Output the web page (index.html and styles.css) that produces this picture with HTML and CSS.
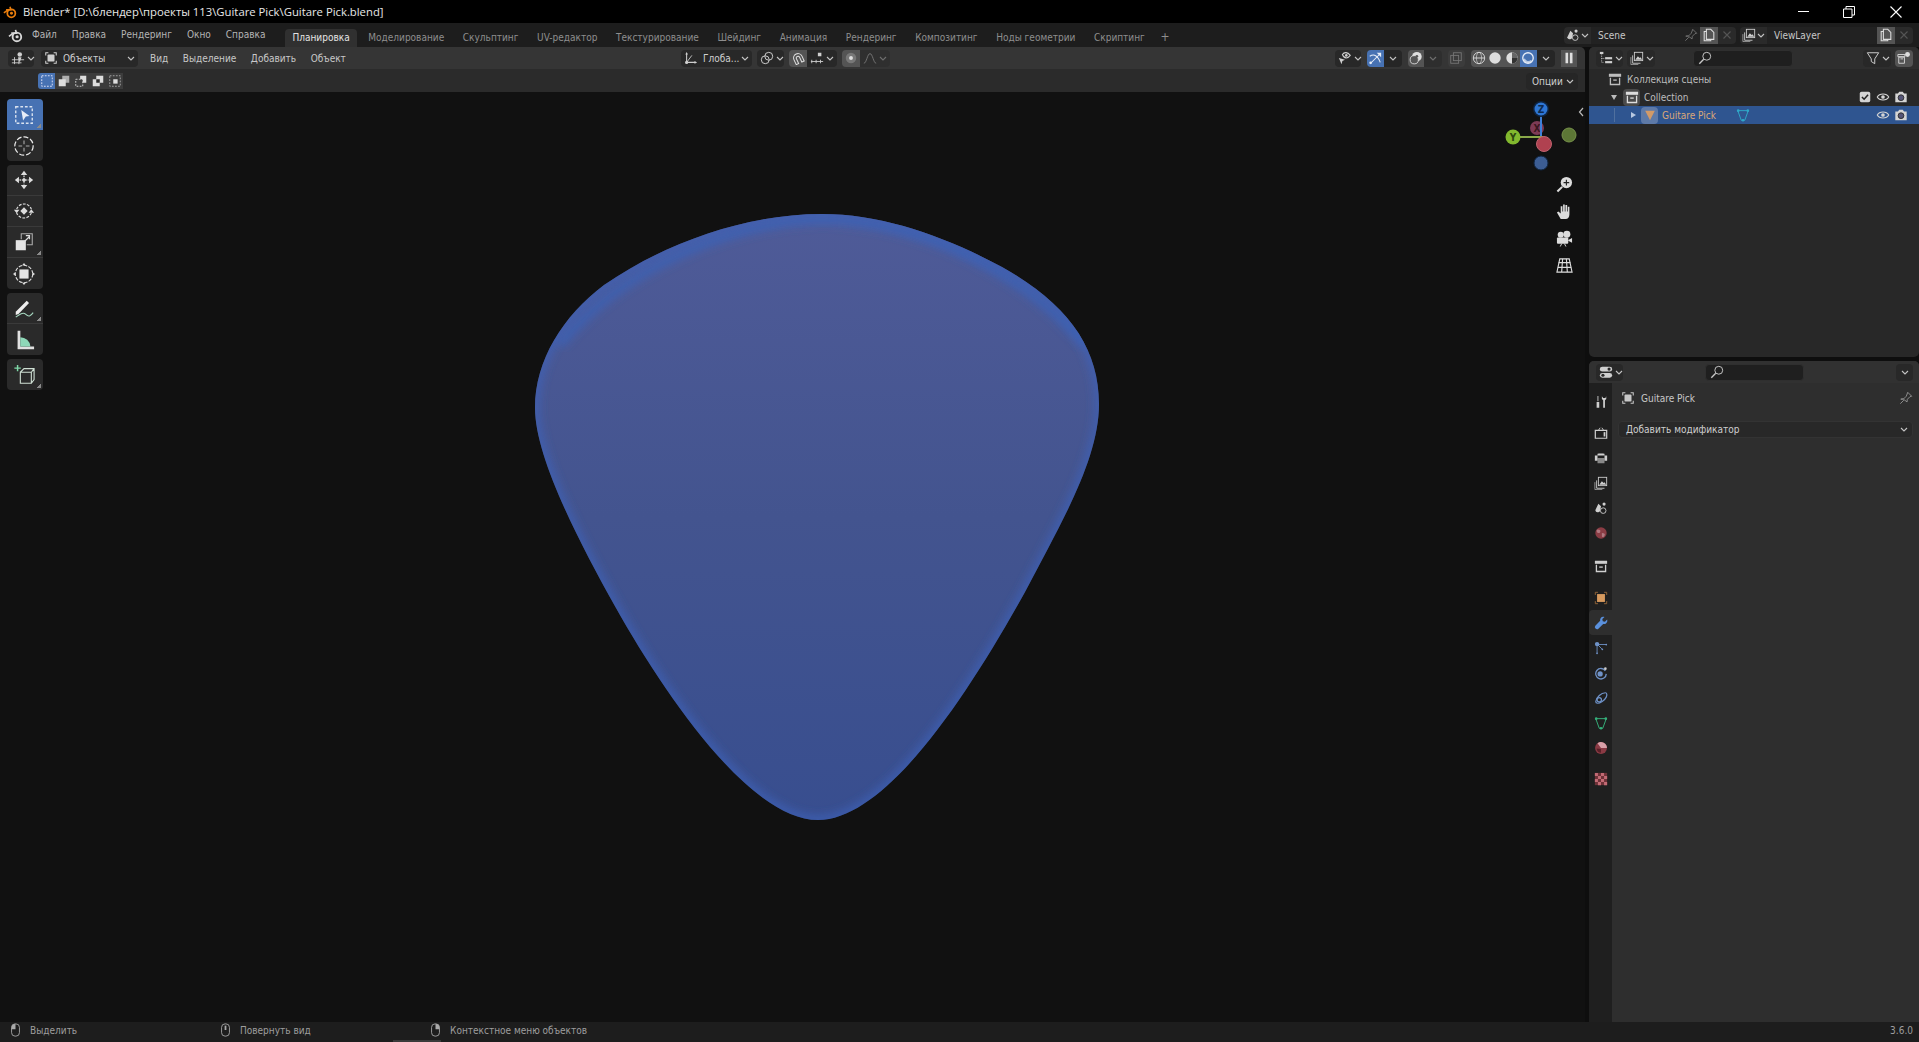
FILE: index.html
```html
<!DOCTYPE html>
<html lang="ru">
  <head>
    <meta charset="UTF-8" />
    <title>Blender</title>
    <link rel="stylesheet" href="styles.css">
  </head>
  <body>
    <!-- icons -->
    <svg class="sprite" width="0" height="0">
      <symbol id="chev" viewBox="0 0 8 5"><path d="M1 1l3 3 3-3" fill="none" stroke="currentColor" stroke-width="1.100"/></symbol>
      <symbol id="blender" viewBox="0 0 16 16"><circle cx="9.500" cy="9.500" r="4.600" fill="none" stroke="currentColor" stroke-width="2"/><circle cx="9.700" cy="9.300" r="1.700" fill="currentColor"/><path d="M1 9l5.500-4M3.500 5.500H9L8 2" fill="none" stroke="currentColor" stroke-width="1.800"/></symbol>
      <symbol id="view3d" viewBox="0 0 16 16"><path d="M1 10h14M1 13.500h11M4 7v8M9 8v7" stroke="currentColor" fill="none"/><circle cx="10" cy="4" r="2.600" fill="currentColor"/><path d="M8 7l2 6 2-6z" fill="currentColor"/></symbol>
      <symbol id="objmode" viewBox="0 0 16 16"><path d="M2 5V2h3M11 2h3v3M14 11v3h-3M5 14H2v-3" fill="none" stroke="currentColor" stroke-width="1.200"/><rect x="4" y="4" width="8" height="8" rx="1" fill="currentColor"/></symbol>
      <symbol id="sel1" viewBox="0 0 16 16"><rect x="2" y="2" width="12" height="12" fill="none" stroke="currentColor" stroke-dasharray="2 1.500"/></symbol>
      <symbol id="sel2" viewBox="0 0 16 16"><rect x="6" y="2" width="8" height="8" fill="currentColor" opacity=".7"/><rect x="2" y="6" width="8" height="8" fill="currentColor"/></symbol>
      <symbol id="sel3" viewBox="0 0 16 16"><rect x="2" y="6" width="8" height="8" fill="none" stroke="currentColor" stroke-dasharray="2 1.500"/><path d="M7 2h7v8h-4V6H7z" fill="currentColor"/></symbol>
      <symbol id="sel4" viewBox="0 0 16 16"><path d="M6 2h8v8h-4V6H6zM2 6h8v8H2zM6 10h0" fill="currentColor"/><rect x="6" y="6" width="4" height="4" fill="#2b2b2b"/></symbol>
      <symbol id="sel5" viewBox="0 0 16 16"><rect x="2" y="2" width="12" height="12" fill="none" stroke="currentColor" stroke-dasharray="2 1.500" opacity=".7"/><rect x="6" y="6" width="5" height="5" fill="currentColor"/></symbol>
      <symbol id="orient" viewBox="0 0 16 16"><path d="M3 3v10h10" fill="none" stroke="currentColor" stroke-width="1.200"/><path d="M3 13L9 5" stroke="currentColor" fill="none"/><circle cx="3" cy="13" r="1.800" fill="currentColor"/><path d="M1.500 4L3 1l1.500 3zM12 11.500l3 1.500-3 1.500z" fill="currentColor"/></symbol>
      <symbol id="pivot" viewBox="0 0 16 16"><circle cx="6" cy="10" r="4.500" fill="none" stroke="currentColor" stroke-width="1.100"/><circle cx="10" cy="6" r="4.500" fill="none" stroke="currentColor" stroke-width="1.100"/></symbol>
      <symbol id="snap" viewBox="0 0 16 16"><g transform="rotate(-25 8 8)"><path d="M3 14V8a5 5 0 0 1 10 0v6h-3V8a2 2 0 0 0-4 0v6z" fill="none" stroke="currentColor" stroke-width="1.200"/></g></symbol>
      <symbol id="snapinc" viewBox="0 0 16 16"><path d="M1 12h14M2 10v4M7 10v4M12 10v4" stroke="currentColor" fill="none"/><rect x="9" y="2" width="4" height="4" fill="currentColor"/></symbol>
      <symbol id="prop" viewBox="0 0 16 16"><circle cx="8" cy="8" r="6" fill="currentColor" opacity=".25"/><circle cx="8" cy="8" r="2.200" fill="currentColor"/></symbol>
      <symbol id="falloff" viewBox="0 0 16 16"><path d="M1 14c3 0 4-11 7-11s4 11 7 11" fill="none" stroke="currentColor" stroke-width="1.100"/></symbol>
      <symbol id="eyeview" viewBox="0 0 16 16"><path d="M5 4c2-3 6-3 9 1-3 4-7 4-9-1z" fill="none" stroke="currentColor" stroke-width="1.200"/><circle cx="9.500" cy="5" r="1.500" fill="currentColor"/><path d="M1 8l7 2-3 1.500L4 15z" fill="currentColor"/></symbol>
      <symbol id="gizmo" viewBox="0 0 16 16"><path d="M3 14L13 4" stroke="currentColor" stroke-width="1.200"/><path d="M2 6c5-3 9-1 12 7" fill="none" stroke="currentColor" stroke-width="1.200"/><path d="M10 2h5v5z" fill="currentColor"/><circle cx="3" cy="13.500" r="1.500" fill="currentColor"/></symbol>
      <symbol id="overlay" viewBox="0 0 16 16"><circle cx="9" cy="6.500" r="5.500" fill="currentColor"/><circle cx="6" cy="10" r="4.700" fill="#555" stroke="currentColor"/><circle cx="9" cy="6" r="1.500" fill="#555"/></symbol>
      <symbol id="xray" viewBox="0 0 16 16"><rect x="5" y="2" width="9" height="9" fill="none" stroke="currentColor"/><rect x="2" y="5" width="9" height="9" fill="none" stroke="currentColor"/></symbol>
      <symbol id="wire" viewBox="0 0 16 16"><circle cx="8" cy="8" r="6.500" fill="none" stroke="currentColor"/><ellipse cx="8" cy="8" rx="3" ry="6.500" fill="none" stroke="currentColor" stroke-width=".7"/><path d="M1.500 8h13" stroke="currentColor"/></symbol>
      <symbol id="solid" viewBox="0 0 16 16"><circle cx="8" cy="8" r="6.500" fill="currentColor"/></symbol>
      <symbol id="matprev" viewBox="0 0 16 16"><circle cx="8" cy="8" r="6.500" fill="currentColor"/><path d="M8 8h6.500A6.500 6.500 0 0 1 8 14.500z" fill="#333"/><path d="M8 1.500A6.500 6.500 0 0 1 14.500 8H8z" fill="#666"/></symbol>
      <symbol id="render" viewBox="0 0 16 16"><circle cx="8" cy="8" r="6" fill="none" stroke="currentColor" stroke-width="1.500"/><path d="M3.500 9A5 5 0 0 0 12 11" fill="none" stroke="currentColor" stroke-width="2.200" opacity=".7"/></symbol>
      <symbol id="pause" viewBox="0 0 16 16"><rect x="4" y="2" width="3" height="12" fill="currentColor"/><rect x="9" y="2" width="3" height="12" fill="currentColor"/></symbol>
      <symbol id="scene" viewBox="0 0 16 16"><path d="M5 3L1.500 10.500a3 3 0 0 0 5.500 1L8 6z" fill="currentColor"/><circle cx="10.500" cy="11" r="3.200" fill="none" stroke="currentColor"/><circle cx="11.500" cy="3.500" r="1.800" fill="currentColor"/></symbol>
      <symbol id="layer" viewBox="0 0 16 16"><path d="M3 5v9h9" fill="none" stroke="currentColor"/><path d="M1 7v8.500h8.500" fill="none" stroke="currentColor" opacity=".7"/><rect x="5" y="1.500" width="9.500" height="9.500" fill="none" stroke="currentColor"/><path d="M6 10l3-4 2 2 1-1 2 3z" fill="currentColor"/></symbol>
      <symbol id="pin" viewBox="0 0 16 16"><path d="M10 1.500l4.500 4.500-2 .5-3 3-.3 3L5 9.300l-3 0 3.300-.3 3-3z" fill="none" stroke="currentColor"/><path d="M5.500 10.500L1.500 14.500" stroke="currentColor"/></symbol>
      <symbol id="copy" viewBox="0 0 16 16"><path d="M5 1.500h5l3.500 3.500v8H5z" fill="none" stroke="currentColor" stroke-width="1.200"/><path d="M5 4H2.500v10.500H10V13" fill="none" stroke="currentColor" stroke-width="1.200"/></symbol>
      <symbol id="close" viewBox="0 0 16 16"><path d="M4 4l8 8M12 4l-8 8" stroke="currentColor" stroke-width="1.300"/></symbol>
      <symbol id="outliner" viewBox="0 0 16 16"><rect x="1" y="1" width="4" height="2.500" fill="currentColor"/><path d="M3 4v9h3M3 8.500h3" fill="none" stroke="currentColor" stroke-dasharray="1 1"/><rect x="7" y="7" width="8" height="2.500" fill="currentColor"/><rect x="7" y="11.500" width="8" height="2.500" fill="currentColor"/></symbol>
      <symbol id="propsed" viewBox="0 0 16 16"><rect x="1" y="2" width="14" height="5.500" rx="2.700" fill="currentColor"/><circle cx="11.500" cy="4.700" r="1.800" fill="#282828"/><rect x="1" y="9" width="14" height="5.500" rx="2.700" fill="currentColor"/><circle cx="4.500" cy="11.700" r="1.800" fill="#282828"/></symbol>
      <symbol id="search" viewBox="0 0 16 16"><circle cx="10" cy="6" r="4.500" fill="none" stroke="currentColor" stroke-width="1.100"/><path d="M6.500 9.500L1.500 14.500" stroke="currentColor" stroke-width="1.600"/></symbol>
      <symbol id="filter" viewBox="0 0 16 16"><path d="M1.500 2h13L10 9v5.500L6 12V9z" fill="none" stroke="currentColor" stroke-width="1.100"/></symbol>
      <symbol id="newcoll" viewBox="0 0 16 16"><path d="M1 4h8v2.500H1zM2 7h6.500v7H2z" fill="none" stroke="currentColor"/><path d="M4 9h3" stroke="currentColor"/><circle cx="12" cy="4" r="2.800" fill="currentColor"/></symbol>
      <symbol id="coll" viewBox="0 0 16 16"><path d="M1 2h14v3.500H1z" fill="currentColor"/><path d="M2 6.500V15h12V6.500h-1.500v7H3.500v-7z" fill="currentColor"/><path d="M6 8.500h4v1.500H6z" fill="currentColor"/></symbol>
      <symbol id="eye" viewBox="0 0 16 16"><path d="M1.500 8C4 3.500 12 3.500 14.500 8 12 12.500 4 12.500 1.500 8z" fill="none" stroke="currentColor" stroke-width="1.300"/><circle cx="8" cy="8" r="2.100" fill="currentColor"/></symbol>
      <symbol id="cam" viewBox="0 0 16 16"><path d="M1.500 4h3l1.500-2h4l1.500 2h3v10h-13z" fill="currentColor"/><circle cx="8" cy="8.800" r="3.300" fill="#557" stroke="#2a2a2a"/></symbol>
      <symbol id="check" viewBox="0 0 16 16"><rect x="2" y="2" width="12" height="12" rx="2" fill="currentColor"/><path d="M4.500 8l2.500 2.500 4.500-5" fill="none" stroke="#222" stroke-width="1.800"/></symbol>
      <symbol id="meshdata" viewBox="0 0 16 16"><path d="M2 3h12l-4 11H6z" fill="none" stroke="currentColor" stroke-width="1.100"/><circle cx="2.500" cy="3" r="1.500" fill="currentColor"/><circle cx="13.500" cy="3" r="1.500" fill="currentColor"/><circle cx="8" cy="14" r="1.500" fill="currentColor"/></symbol>
      <symbol id="meshobj" viewBox="0 0 16 16"><path d="M2.500 3h11L8 14z" fill="currentColor"/></symbol>
      <symbol id="tool" viewBox="0 0 16 16"><path d="M3 8h3v6.500H3zM4 1h1v6H4z" fill="currentColor"/><path d="M9 1.500v3l1.500 1.500V14.500h2V6L14 4.500v-3l-1 2h-2.500z" fill="currentColor"/></symbol>
      <symbol id="rtab" viewBox="0 0 16 16"><path d="M1.500 5h13v9h-13z" fill="none" stroke="currentColor" stroke-width="1.400"/><path d="M5 5L7 2M11 5L9 2" stroke="currentColor"/><rect x="11" y="7" width="2" height="5" fill="currentColor"/></symbol>
      <symbol id="otab" viewBox="0 0 16 16"><path d="M1 5h14v6h-3V3H4v8H1z" fill="currentColor"/><rect x="4" y="8" width="8" height="6" fill="currentColor" opacity=".6"/><rect x="5" y="3" width="6" height="1" fill="currentColor"/></symbol>
      <symbol id="world" viewBox="0 0 16 16"><circle cx="8" cy="8" r="6.500" fill="#8a3c44"/><path d="M4 4c3 0 4 1 3 3S3 8 3 5zM9 8c3 0 4 1 3 3s-2 2-3 1z" fill="#c8a0a8" opacity=".6"/></symbol>
      <symbol id="objtab" viewBox="0 0 16 16"><path d="M1.500 4.500v-3h3M11.500 1.500h3v3M14.500 11.500v3h-3M4.500 14.500h-3v-3" fill="none" stroke="#9a6a3a"/><rect x="3.500" y="3.500" width="9" height="9" fill="#d79a5e"/></symbol>
      <symbol id="wrench" viewBox="0 0 16 16"><path d="M15 4l-2.500 2.500-2.500-.5-.5-2.500L12 1c-3-1-5.500 1-5 4.500L1.500 11a2.500 2.500 0 0 0 3.500 3.500L10.500 9c3 1 5.500-2 4.500-5z" fill="currentColor"/></symbol>
      <symbol id="particles" viewBox="0 0 16 16"><circle cx="3.500" cy="3.500" r="2.500" fill="currentColor"/><path d="M4 4h10M4 4l5 5M3.500 4v10" stroke="currentColor" fill="none"/><circle cx="14" cy="4" r="1" fill="currentColor"/><circle cx="9.500" cy="9.500" r="1" fill="currentColor"/><circle cx="3.500" cy="14" r="1" fill="currentColor"/></symbol>
      <symbol id="physics" viewBox="0 0 16 16"><path d="M13 5.500A6 6 0 1 0 14 9" fill="none" stroke="currentColor" stroke-width="1.500"/><circle cx="7" cy="9" r="3" fill="currentColor"/><circle cx="13" cy="3" r="1.500" fill="#ccc"/></symbol>
      <symbol id="constr" viewBox="0 0 16 16"><path d="M2 12C3 7 8 2 13 2c2 0 2 3 1 5-2 4-7 7-10 7-1 0-2-1-2-2z" fill="none" stroke="currentColor" stroke-width="1.400"/><circle cx="6" cy="10" r="2.500" fill="none" stroke="currentColor" stroke-width="1.400"/></symbol>
      <symbol id="material" viewBox="0 0 16 16"><circle cx="8" cy="8" r="6.800" fill="#8a3a44"/><path d="M8 8h6.800A6.800 6.800 0 0 0 4 2.500z" fill="#d8a0a8"/><path d="M3 8.500a5 5 0 0 0 5 5V9z" fill="#5a2028"/></symbol>
      <symbol id="checker" viewBox="0 0 16 16"><path d="M1 1h14v14H1z" fill="#6e3238"/><path d="M1 1h3.500v3.500H1zM8 1h3.500v3.500H8zM4.500 4.500H8V8H4.500zM11.500 4.500H15V8h-3.500zM1 8h3.500v3.500H1zM8 8h3.500v3.500H8zM4.500 11.500H8V15H4.500zM11.500 11.500H15V15h-3.500z" fill="#c26a74"/></symbol>
      <symbol id="mouse" viewBox="0 0 12 16"><rect x="1.500" y="1" width="9" height="14" rx="4" fill="none" stroke="currentColor"/><path d="M6 1H5.500A4 4 0 0 0 1.500 5v2H6z" fill="currentColor"/></symbol>
      <symbol id="mousemid" viewBox="0 0 12 16"><rect x="1.500" y="1" width="9" height="14" rx="4" fill="none" stroke="currentColor"/><rect x="5" y="3" width="2" height="5" fill="currentColor"/></symbol>
      <symbol id="mouser" viewBox="0 0 12 16"><rect x="1.500" y="1" width="9" height="14" rx="4" fill="none" stroke="currentColor"/><path d="M6 1h.5a4 4 0 0 1 4 4v2H6z" fill="currentColor"/></symbol>
      <symbol id="zoomnav" viewBox="0 0 18 18"><circle cx="11" cy="7" r="6" fill="currentColor"/><path d="M8 7h6M11 4v6" stroke="#222" stroke-width="1.200"/><path d="M6.500 11.500L1.500 16.500" stroke="currentColor" stroke-width="2.200"/></symbol>
      <symbol id="hand" viewBox="0 0 18 18"><path d="M5 17L1 10l1.500-1L5 11V3.500h1.800V9h.7V1.500h1.800V9h.7V2h1.800v7h.7V4h1.700v8c0 3-1.500 5-4 5z" fill="currentColor"/></symbol>
      <symbol id="camnav" viewBox="0 0 18 18"><circle cx="5" cy="5" r="3.200" fill="currentColor"/><circle cx="11.500" cy="4.500" r="3.700" fill="currentColor"/><rect x="1" y="8" width="12" height="6.500" rx="1" fill="currentColor"/><path d="M13 10.500l4-2v5l-4-2z" fill="currentColor"/><path d="M6 14.500l-1.500 3M9 14.500l1.500 3" stroke="currentColor"/></symbol>
      <symbol id="gridnav" viewBox="0 0 18 18"><path d="M4 2h10l3 14H1z" fill="none" stroke="currentColor" stroke-width="1.200"/><path d="M2.800 6h12.400M2 11h14M7 2L6 16M11 2l1 14" stroke="currentColor" stroke-width="1.200"/></symbol>
      <symbol id="t-select" viewBox="0 0 24 24"><rect x="3" y="3" width="18" height="18" fill="none" stroke="#fff" stroke-width="1.500" stroke-dasharray="3 2" opacity=".8"/><path d="M9 6.500l9 6.500-4 .5L11 18z" fill="#e8eef8"/></symbol>
      <symbol id="t-cursor" viewBox="0 0 24 24"><circle cx="12" cy="12" r="10" fill="none" stroke="#eee" stroke-width="1.300" stroke-dasharray="5.500 2.200"/><path d="M12 6v4M12 14v4M6 12h4M14 12h4" stroke="#aaa" stroke-width="1.200"/></symbol>
      <symbol id="t-move" viewBox="0 0 24 24"><path d="M12 2l3.500 4.500h-7zM12 22l-3.500-4.500h7zM2 12l4.500-3.500v7zM22 12l-4.500 3.500v-7z" fill="#ddd"/><path d="M12 7v10M7 12h10" stroke="#ccc" stroke-width="1.500" stroke-dasharray="2 1"/><circle cx="12" cy="12" r="1.800" fill="#ddd"/></symbol>
      <symbol id="t-rotate" viewBox="0 0 24 24"><path d="M4 10A8.500 8.500 0 0 1 20 10M20 14A8.500 8.500 0 0 1 4 14" fill="none" stroke="#ddd" stroke-width="1.300" stroke-dasharray="3 1.500"/><path d="M1 10.500h6l-3 4zM17 14h6l-3-4z" fill="#ddd"/><path d="M12 8l4 4-4 4-4-4z" fill="#ddd"/></symbol>
      <symbol id="t-scale" viewBox="0 0 24 24"><path d="M9 9V3h12v12h-6" fill="none" stroke="#aaa" stroke-width="1.200"/><rect x="3" y="10" width="11" height="11" fill="#e4e4e4"/><path d="M12 12l6-6M14 5h4v4" fill="none" stroke="#ddd" stroke-width="1.300"/></symbol>
      <symbol id="t-trans" viewBox="0 0 24 24"><circle cx="12" cy="12" r="9.500" fill="none" stroke="#ddd" stroke-width="1.200" stroke-dasharray="4 1.500"/><rect x="7" y="7" width="10" height="10" fill="#e4e4e4"/><path d="M12 0l2 2.500h-4zM12 24l-2-2.500h4zM0 12l2.500-2v4zM24 12l-2.500 2v-4z" fill="#ddd"/></symbol>
      <symbol id="t-annot" viewBox="0 0 24 24"><path d="M3 16L15 4l2.500 2.500L6 18.500l-3 1z" fill="#eee"/><path d="M3 22c4-3 8-6 11-3s5 2 8-2" fill="none" stroke="#a6d8c0" stroke-width="1.200"/></symbol>
      <symbol id="t-measure" viewBox="0 0 24 24"><path d="M5 2h3v17h15v3H5z" fill="#e0e0e0"/><path d="M8 9a11 11 0 0 1 11 10H8z" fill="#8ed8b8"/></symbol>
      <symbol id="t-add" viewBox="0 0 24 24"><path d="M8 9h12v12H8zM8 9l4-4h11v12l-3 4M20 9l3-4" fill="none" stroke="#cfe0d4" stroke-width="1.200"/><path d="M5 1v7M1.500 4.500h7" stroke="#7fd8a8" stroke-width="1.600"/></symbol>
    </svg>

    <div class="titlebar">
      <svg class="title-logo"><use href="#blender"/></svg>
      <span class="title-text">Blender* [D:\блендер\проекты 113\Guitare Pick\Guitare Pick.blend]</span>
      <div class="win-btns">
        <span class="win-min"></span>
        <svg class="win-max" viewBox="0 0 12 12"><path d="M3 3V.5h8.500V9H9M.5 3h8.500v8.500H.5z" fill="none" stroke="#fff"/></svg>
        <svg class="win-close" viewBox="0 0 12 12"><path d="M.5.500l11 11M11.500.500l-11 11" stroke="#fff" stroke-width="1.100"/></svg>
      </div>
    </div>

    <div class="topbar">
      <svg class="top-logo"><use href="#blender"/></svg>
      <ul class="menu">
        <li>Файл</li>
        <li>Правка</li>
        <li>Рендеринг</li>
        <li>Окно</li>
        <li>Справка</li>
      </ul>
      <ul class="tabs">
        <li class="active">Планировка</li>
        <li>Моделирование</li>
        <li>Скульптинг</li>
        <li>UV-редактор</li>
        <li>Текстурирование</li>
        <li>Шейдинг</li>
        <li>Анимация</li>
        <li>Рендеринг</li>
        <li>Композитинг</li>
        <li>Ноды геометрии</li>
        <li>Скриптинг</li>
        <li class="tab-add">+</li>
      </ul>
      <div class="scene-group">
        <div class="picker"><svg class="ic"><use href="#scene"/></svg><svg class="chev"><use href="#chev"/></svg></div>
        <div class="name-field scene-name">Scene<svg class="ic pin-ic"><use href="#pin"/></svg></div>
        <div class="sq-btn grey"><svg class="ic"><use href="#copy"/></svg></div>
        <div class="sq-btn dim"><svg class="ic"><use href="#close"/></svg></div>
      </div>
      <div class="scene-group layer-group">
        <div class="picker"><svg class="ic"><use href="#layer"/></svg><svg class="chev"><use href="#chev"/></svg></div>
        <div class="name-field layer-name">ViewLayer</div>
        <div class="sq-btn grey"><svg class="ic"><use href="#copy"/></svg></div>
        <div class="sq-btn dim"><svg class="ic"><use href="#close"/></svg></div>
      </div>
    </div>

    <div class="workspace">
      <!-- 3d view -->
      <div class="view-area">
        <div class="view-header">
          <div class="hdr-left">
            <div class="dd editor-dd"><svg class="ic"><use href="#view3d"/></svg><svg class="chev"><use href="#chev"/></svg></div>
            <div class="dd mode-dd"><svg class="ic"><use href="#objmode"/></svg><span>Объекты</span><svg class="chev"><use href="#chev"/></svg></div>
            <ul class="view-menu">
              <li>Вид</li>
              <li>Выделение</li>
              <li>Добавить</li>
              <li>Объект</li>
            </ul>
          </div>
          <div class="hdr-center">
            <div class="dd orient-dd"><svg class="ic"><use href="#orient"/></svg><span>Глоба...</span><svg class="chev"><use href="#chev"/></svg></div>
            <div class="dd pivot-dd"><svg class="ic"><use href="#pivot"/></svg><svg class="chev"><use href="#chev"/></svg></div>
            <div class="joined snap-dd">
              <div class="sq-btn grey"><svg class="ic"><use href="#snap"/></svg></div>
              <div class="dd"><svg class="ic"><use href="#snapinc"/></svg><svg class="chev"><use href="#chev"/></svg></div>
            </div>
            <div class="joined prop-dd">
              <div class="sq-btn grey"><svg class="ic"><use href="#prop"/></svg></div>
              <div class="dd faded"><svg class="ic"><use href="#falloff"/></svg><svg class="chev"><use href="#chev"/></svg></div>
            </div>
          </div>
          <div class="hdr-right">
            <div class="dd eye-dd"><svg class="ic"><use href="#eyeview"/></svg><svg class="chev"><use href="#chev"/></svg></div>
            <div class="joined">
              <div class="sq-btn blue"><svg class="ic"><use href="#gizmo"/></svg></div>
              <div class="dd narrow"><svg class="chev"><use href="#chev"/></svg></div>
            </div>
            <div class="joined">
              <div class="sq-btn grey"><svg class="ic"><use href="#overlay"/></svg></div>
              <div class="dd narrow faded"><svg class="chev"><use href="#chev"/></svg></div>
            </div>
            <div class="sq-btn grey off"><svg class="ic"><use href="#xray"/></svg></div>
            <div class="joined">
              <div class="sq-btn grey"><svg class="ic"><use href="#wire"/></svg></div>
              <div class="sq-btn grey"><svg class="ic"><use href="#solid"/></svg></div>
              <div class="sq-btn grey"><svg class="ic"><use href="#matprev"/></svg></div>
              <div class="sq-btn blue"><svg class="ic"><use href="#render"/></svg></div>
              <div class="dd narrow"><svg class="chev"><use href="#chev"/></svg></div>
            </div>
            <div class="sq-btn grey pause-btn"><svg class="ic"><use href="#pause"/></svg></div>
          </div>
        </div>
        <div class="tool-settings">
          <div class="sel-modes">
            <div class="sel-btn on"><svg class="ic"><use href="#sel1"/></svg></div>
            <div class="sel-btn"><svg class="ic"><use href="#sel2"/></svg></div>
            <div class="sel-btn"><svg class="ic"><use href="#sel3"/></svg></div>
            <div class="sel-btn"><svg class="ic"><use href="#sel4"/></svg></div>
            <div class="sel-btn"><svg class="ic"><use href="#sel5"/></svg></div>
          </div>
          <div class="dd options-dd"><span>Опции</span><svg class="chev"><use href="#chev"/></svg></div>
        </div>
        <div class="viewport">
          <svg class="pick" viewBox="0 92 1585 930">
            <defs>
              <linearGradient id="pickfill" x1="0" y1="0" x2="0" y2="1">
                <stop offset="0" stop-color="#4f5b98"/>
                <stop offset="0.5" stop-color="#43548f"/>
                <stop offset="1" stop-color="#384e8f"/>
              </linearGradient>
              <path id="pickshape" d="M822 214C745 214 665 243 604 285C563 316 535 360 535 408C535 455 575 535 616 608C665 695 750 820 818 820C885 820 965 700 1025 592C1060 525 1099 460 1099 404C1099 348 1068 304 1002 267C948 238 885 214 822 214Z"/>
              <clipPath id="pickclip"><use href="#pickshape"/></clipPath>
              <filter id="soft" x="-5%" y="-5%" width="110%" height="110%"><feGaussianBlur stdDeviation="4"/></filter>
            </defs>
            <use href="#pickshape" fill="url(#pickfill)"/>
            <g clip-path="url(#pickclip)">
              <use href="#pickshape" fill="none" stroke="#3c62b8" stroke-width="9" stroke-opacity=".75" filter="url(#soft)"/>
              <path d="M560 345C620 270 730 222 822 220C920 222 1020 270 1085 345" fill="none" stroke="#3c62b8" stroke-width="9" stroke-opacity=".8" filter="url(#soft)"/>
            </g>
          </svg>

          <div class="tool-shelf">
            <div class="tool-group">
              <div class="tool on"><svg class="tool-ic"><use href="#t-select"/></svg><i class="corner"></i></div>
              <div class="tool"><svg class="tool-ic"><use href="#t-cursor"/></svg></div>
            </div>
            <div class="tool-group">
              <div class="tool"><svg class="tool-ic"><use href="#t-move"/></svg></div>
              <div class="tool"><svg class="tool-ic"><use href="#t-rotate"/></svg></div>
              <div class="tool"><svg class="tool-ic"><use href="#t-scale"/></svg><i class="corner"></i></div>
              <div class="tool"><svg class="tool-ic"><use href="#t-trans"/></svg></div>
            </div>
            <div class="tool-group">
              <div class="tool"><svg class="tool-ic"><use href="#t-annot"/></svg><i class="corner"></i></div>
              <div class="tool"><svg class="tool-ic"><use href="#t-measure"/></svg></div>
            </div>
            <div class="tool-group">
              <div class="tool"><svg class="tool-ic"><use href="#t-add"/></svg><i class="corner"></i></div>
            </div>
          </div>

          <svg class="nav-gizmo" viewBox="0 0 80 80">
            <circle cx="32" cy="30" r="7" fill="#7d3a55"/>
            <text class="giz-label" x="32" y="33.500" fill="#3a1620">X</text>
            <path d="M36 11V46" stroke="#3f7fd8" stroke-width="2"/>
            <path d="M8 39H38" stroke="#8aa84a" stroke-width="2"/>
            <circle cx="36" cy="11" r="8" fill="#0f2440"/>
            <circle cx="36" cy="11" r="6.500" fill="#2e76d4"/>
            <text class="giz-label" x="36" y="14.500" fill="#0e2a50">Z</text>
            <circle cx="8" cy="39" r="7.500" fill="#82b82e"/>
            <text class="giz-label" x="8" y="42.500" fill="#2d4510">Y</text>
            <circle cx="64" cy="37" r="7" fill="#5d7736" stroke="#77924a"/>
            <circle cx="39" cy="46" r="7.500" fill="#b04150" stroke="#c0636f"/>
            <circle cx="36" cy="65" r="7" fill="#3c5d93" stroke="#0f2440"/>
            <path d="M78 10l-3.500 4 3.500 4" fill="none" stroke="#bbb" stroke-width="1.200"/>
          </svg>
          <div class="nav-btns">
            <svg class="nav-ic"><use href="#zoomnav"/></svg>
            <svg class="nav-ic"><use href="#hand"/></svg>
            <svg class="nav-ic"><use href="#camnav"/></svg>
            <svg class="nav-ic"><use href="#gridnav"/></svg>
          </div>
        </div>
      </div>

      <div class="side">
        <!-- outliner -->
        <div class="outliner">
          <div class="out-header">
            <div class="dd ed-btn"><svg class="ic"><use href="#outliner"/></svg><svg class="chev"><use href="#chev"/></svg></div>
            <div class="dd ed-btn mode-btn"><svg class="ic"><use href="#layer"/></svg><svg class="chev"><use href="#chev"/></svg></div>
            <div class="search out-search"><svg class="ic"><use href="#search"/></svg></div>
            <div class="dd ed-btn filter-btn"><svg class="ic"><use href="#filter"/></svg><svg class="chev"><use href="#chev"/></svg></div>
            <div class="sq-btn grey"><svg class="ic"><use href="#newcoll"/></svg></div>
          </div>
          <div class="row row-scene"><svg class="ic"><use href="#coll"/></svg><span>Коллекция сцены</span></div>
          <div class="row row-coll">
            <i class="arrow down"></i>
            <span class="row-icbox"><svg class="ic"><use href="#coll"/></svg></span>
            <span>Collection</span>
            <div class="row-flags">
              <svg class="ic"><use href="#check"/></svg>
              <svg class="ic"><use href="#eye"/></svg>
              <svg class="ic"><use href="#cam"/></svg>
            </div>
          </div>
          <div class="row row-obj">
            <i class="tree-line"></i>
            <i class="arrow"></i>
            <span class="row-icbox obj-box"><svg class="ic"><use href="#meshobj"/></svg></span>
            <span class="obj-name">Guitare Pick</span>
            <svg class="ic mesh-ic"><use href="#meshdata"/></svg>
            <div class="row-flags">
              <svg class="ic"><use href="#eye"/></svg>
              <svg class="ic"><use href="#cam"/></svg>
            </div>
          </div>
        </div>

        <!-- properties -->
        <div class="props">
          <div class="props-header">
            <div class="dd ed-btn"><svg class="ic"><use href="#propsed"/></svg><svg class="chev"><use href="#chev"/></svg></div>
            <div class="search props-search"><svg class="ic"><use href="#search"/></svg></div>
            <div class="dd opts-btn"><svg class="chev"><use href="#chev"/></svg></div>
          </div>
          <div class="props-body">
            <div class="prop-tabs">
              <div class="ptab"><svg class="ic"><use href="#tool"/></svg></div>
              <div class="ptab gap-1"><svg class="ic"><use href="#rtab"/></svg></div>
              <div class="ptab"><svg class="ic"><use href="#otab"/></svg></div>
              <div class="ptab"><svg class="ic"><use href="#layer"/></svg></div>
              <div class="ptab"><svg class="ic"><use href="#scene"/></svg></div>
              <div class="ptab"><svg class="ic"><use href="#world"/></svg></div>
              <div class="ptab gap-2"><svg class="ic"><use href="#coll"/></svg></div>
              <div class="ptab gap-3"><svg class="ic"><use href="#objtab"/></svg></div>
              <div class="ptab on"><svg class="ic"><use href="#wrench"/></svg></div>
              <div class="ptab tint-blue"><svg class="ic"><use href="#particles"/></svg></div>
              <div class="ptab tint-blue"><svg class="ic"><use href="#physics"/></svg></div>
              <div class="ptab tint-blue"><svg class="ic"><use href="#constr"/></svg></div>
              <div class="ptab tint-green"><svg class="ic"><use href="#meshdata"/></svg></div>
              <div class="ptab"><svg class="ic"><use href="#material"/></svg></div>
              <div class="ptab gap-4"><svg class="ic"><use href="#checker"/></svg></div>
            </div>
            <div class="prop-main">
              <div class="obj-line"><svg class="ic"><use href="#objmode"/></svg><span>Guitare Pick</span><svg class="ic pin-ic"><use href="#pin"/></svg></div>
              <div class="add-mod"><span>Добавить модификатор</span><svg class="chev"><use href="#chev"/></svg></div>
            </div>
          </div>
        </div>
      </div>
    </div>

    <div class="statusbar">
      <div class="hint"><svg class="mouse-ic"><use href="#mouse"/></svg>Выделить</div>
      <div class="hint"><svg class="mouse-ic"><use href="#mousemid"/></svg>Повернуть вид</div>
      <div class="hint"><svg class="mouse-ic"><use href="#mouser"/></svg>Контекстное меню объектов</div>
      <span class="version">3.6.0</span>
      <i class="status-strip"></i>
    </div>
  </body>
</html>
```

FILE: styles.css
```css
/*global*/
* {
  margin: 0;
  padding: 0;
  box-sizing: border-box;
}

html,
body {
  width: 1919px;
  height: 1042px;
  overflow: hidden;
}

body {
  display: flex;
  flex-direction: column;
  background-color: #0e0e0e;
  font-family: "DejaVu Sans Condensed", "DejaVu Sans", "Noto Sans", sans-serif;
  font-size: 10px;
  color: #c8c8c8;
}

ul {
  list-style: none;
}

i {
  display: block;
}

.sprite {
  position: absolute;
}

.ic {
  width: 14px;
  height: 14px;
  flex: none;
}

.chev {
  width: 8px;
  height: 5px;
  flex: none;
  color: #c4c4c4;
}

/*title bar*/
.titlebar {
  height: 23px;
  flex: none;
  display: flex;
  align-items: center;
  background-color: #000;
  color: #e8e8e8;
  font-family: "Open Sans", sans-serif;
  font-size: 11.300px;
}

.title-logo {
  width: 14px;
  height: 14px;
  margin: 0 6px 0 3px;
  color: #e87d0d;
}

.win-btns {
  margin-left: auto;
  display: flex;
  align-items: center;
}

.win-min {
  width: 11px;
  height: 1px;
  background-color: #fff;
  margin-right: 34px;
}

.win-max {
  width: 12px;
  height: 12px;
  margin-right: 35px;
}

.win-close {
  width: 12px;
  height: 12px;
  margin-right: 17px;
}

/*top bar*/
.topbar {
  height: 24px;
  flex: none;
  display: flex;
  align-items: center;
  background-color: #1d1d1d;
  color: #b4b4b4;
}

.top-logo {
  width: 15px;
  height: 15px;
  margin-left: 8px;
  color: #d8d8d8;
}

.menu {
  display: flex;
  margin: 0 0 2px 9px;
  gap: 15px;
}

.tabs {
  display: flex;
  align-self: flex-end;
  gap: 4.600px;
  margin-left: 20px;
  height: 18px;
}

.tabs li {
  padding: 0 7px;
  line-height: 17px;
  color: #8e8e8e;
  border-radius: 4px 4px 0 0;
}

.tabs .active {
  background-color: #303030;
  color: #e4e4e4;
}

.tabs .tab-add {
  font-size: 12px;
  padding: 0 4px;
}

.scene-group {
  display: flex;
  align-items: center;
  height: 17px;
  margin-left: auto;
}

.layer-group {
  margin-left: 4px;
  margin-right: 6px;
}

.picker {
  width: 27px;
  height: 17px;
  display: flex;
  align-items: center;
  justify-content: center;
  gap: 1px;
  background-color: #2a2a2a;
  border-radius: 4px 0 0 4px;
  color: #cfcfcf;
}

.name-field {
  height: 17px;
  display: flex;
  align-items: center;
  justify-content: space-between;
  padding: 0 2px 0 7px;
  background-color: #222;
  color: #c8c8c8;
}

.scene-name {
  width: 109px;
}

.layer-name {
  width: 110px;
}

.pin-ic {
  color: #777;
}

/*common widgets*/
.dd {
  height: 17px;
  display: flex;
  align-items: center;
  gap: 2px;
  padding: 0 3px;
  background-color: #282828;
  border-radius: 4px;
  color: #cfcfcf;
}

.dd.narrow {
  width: 18px;
  justify-content: center;
  background-color: #262626;
}

.dd.faded {
  opacity: 0.4;
}

.sq-btn {
  width: 18px;
  height: 17px;
  flex: none;
  display: flex;
  align-items: center;
  justify-content: center;
  color: #dedede;
}

.sq-btn.grey {
  background-color: #545454;
}

.sq-btn.blue {
  background-color: #4772b3;
  color: #e8eef8;
}

.sq-btn.dim {
  background-color: #2a2a2a;
  color: #555;
  border-radius: 0 4px 4px 0;
}

.sq-btn.off {
  color: #777;
  background-color: #3c3c3c;
  border-radius: 4px;
}

.joined {
  display: flex;
}

.joined > :first-child {
  border-radius: 4px 0 0 4px;
}

.joined > :last-child {
  border-radius: 0 4px 4px 0;
}

.search {
  height: 17px;
  display: flex;
  align-items: center;
  padding-left: 4px;
  background-color: #1f1f1f;
  border: 1px solid #2f2f2f;
  border-radius: 4px;
  color: #c8c8c8;
}

/*3d view*/
.workspace {
  flex: 1;
  min-height: 0;
  display: flex;
}

.view-area {
  width: 1585px;
  display: flex;
  flex-direction: column;
}

.view-header {
  height: 22px;
  flex: none;
  display: grid;
  grid-template-columns: 681px auto 1fr;
  align-items: center;
  background-color: #353535;
  border-radius: 0 5px 0 0;
}

.hdr-left,
.hdr-center,
.hdr-right {
  display: flex;
  align-items: center;
}

.editor-dd {
  width: 26px;
  margin-left: 8px;
}

.mode-dd {
  width: 97px;
  margin-left: 7px;
}

.mode-dd span {
  margin-left: 3px;
  flex: 1;
}

.view-menu {
  display: flex;
  margin-left: 12px;
  gap: 14.500px;
}

.hdr-center {
  gap: 5px;
}

.orient-dd {
  width: 71px;
}

.orient-dd span {
  flex: 1;
  margin-left: 3px;
}

.pivot-dd {
  width: 27px;
}

.hdr-right {
  justify-content: flex-end;
  gap: 6px;
  padding-right: 8px;
}

.hdr-right .sq-btn {
  width: 16.500px;
}

.eye-dd {
  width: 26px;
}

.tool-settings {
  height: 23px;
  flex: none;
  display: flex;
  align-items: center;
  justify-content: space-between;
  padding: 1px 7px 0 38px;
  background-color: #2b2b2b;
}

.sel-modes {
  display: flex;
}

.sel-btn {
  width: 17px;
  height: 16px;
  display: flex;
  align-items: center;
  justify-content: center;
  background-color: #3c3c3c;
  color: #ddd;
}

.sel-btn.on {
  background-color: #4772b3;
  border-radius: 3px 0 0 3px;
  color: #eef;
}

.options-dd {
  width: 52px;
  justify-content: space-between;
  padding: 0 4px 0 6px;
  background-color: #262626;
}

.viewport {
  flex: 1;
  min-height: 0;
  position: relative;
  padding: 7px 0 0 7px;
  background-color: #111;
}

.pick {
  position: absolute;
  left: 0;
  top: 0;
  width: 1585px;
  height: 930px;
}

.tool-shelf {
  position: relative;
  width: 36px;
  display: flex;
  flex-direction: column;
  gap: 4px;
}

.tool-group {
  background-color: #2a2a2a;
  border-radius: 4px;
}

.tool {
  position: relative;
  height: 31px;
  display: flex;
  align-items: center;
  justify-content: center;
  padding-right: 3px;
  border-bottom: 1px solid #3a3a3a;
}

.tool:last-child {
  border-bottom: none;
}

.tool.on {
  background-color: #4772b3;
  border-radius: 4px 4px 0 0;
  border-bottom: none;
}

.tool-ic {
  width: 22px;
  height: 22px;
}

.corner {
  position: absolute;
  right: 2px;
  bottom: 2px;
  width: 4px;
  height: 4px;
  background: linear-gradient(135deg, transparent 50%, #8a8a8a 50%);
}

.nav-gizmo {
  position: absolute;
  right: 0;
  top: 6px;
  width: 80px;
  height: 80px;
}

.giz-label {
  font-size: 10px;
  font-weight: bold;
  text-anchor: middle;
}

.nav-btns {
  position: absolute;
  right: 12px;
  top: 84px;
  display: flex;
  flex-direction: column;
  gap: 10px;
  color: #dcdcdc;
}

.nav-ic {
  width: 17px;
  height: 17px;
}

/*side panels*/
.side {
  width: 330px;
  margin-left: 4px;
  display: flex;
  flex-direction: column;
  gap: 4px;
}

.outliner {
  height: 310px;
  flex: none;
  background-color: #282828;
  border-radius: 5px;
}

.out-header {
  height: 22px;
  display: flex;
  align-items: center;
  padding: 0 6px 0 7px;
  background-color: #2e2e2e;
  border-radius: 5px 5px 0 0;
}

.ed-btn {
  width: 27px;
}

.mode-btn {
  margin-left: 4px;
  width: 28px;
}

.out-search {
  width: 100px;
  margin-left: 38px;
}

.filter-btn {
  width: 28px;
  margin-left: auto;
  margin-right: 4px;
}

.out-header .sq-btn {
  border-radius: 4px;
}

.row {
  height: 18px;
  display: flex;
  align-items: center;
  color: #bdbdbd;
}

.row-scene {
  margin-top: 1px;
  padding-left: 19px;
}

.row-scene span {
  margin-left: 5px;
}

.row-coll {
  padding: 0 11px 0 22px;
}

.arrow {
  width: 0;
  height: 0;
  border-left: 5px solid #b8c8e0;
  border-top: 3px solid transparent;
  border-bottom: 3px solid transparent;
}

.arrow.down {
  border-left: 3px solid transparent;
  border-right: 3px solid transparent;
  border-top: 5px solid #bbb;
  border-bottom: none;
}

.row-icbox {
  width: 17px;
  height: 17px;
  display: flex;
  align-items: center;
  justify-content: center;
  margin: 0 4px 0 6px;
  background-color: #4a4a4a;
  border-radius: 4px;
  color: #ddd;
}

.row-flags {
  margin-left: auto;
  display: flex;
  gap: 4px;
  color: #d4d4d4;
}

.row-obj {
  position: relative;
  padding: 0 11px 0 42px;
  background-color: #2f5590;
}

.tree-line {
  position: absolute;
  left: 25px;
  top: 2px;
  width: 1px;
  height: 14px;
  background-color: #50709e;
}

.obj-box {
  margin-left: 5px;
  background-color: #5e7aa8;
  color: #d29a68;
}

.obj-name {
  color: #dba878;
}

.mesh-ic {
  margin-left: 20px;
  color: #2fa8c8;
}

.props {
  flex: 1;
  min-height: 0;
  display: flex;
  flex-direction: column;
  background-color: #2e2e2e;
  border-radius: 5px 5px 0 0;
}

.props-header {
  height: 22px;
  flex: none;
  display: flex;
  align-items: center;
  padding: 0 6px 0 7px;
  background-color: #313131;
  border-radius: 5px 5px 0 0;
}

.props-search {
  width: 99px;
  margin-left: 82px;
}

.opts-btn {
  width: 17px;
  justify-content: center;
  margin-left: auto;
}

.props-body {
  flex: 1;
  min-height: 0;
  display: flex;
}

.prop-tabs {
  width: 23px;
  flex: none;
  padding-top: 6px;
  background-color: #1f1f1f;
}

.ptab {
  height: 25px;
  display: flex;
  align-items: center;
  justify-content: center;
  color: #cfcfcf;
}

.ptab.gap-1 {
  margin-top: 6px;
}

.ptab.gap-2 {
  margin-top: 8px;
}

.ptab.gap-3 {
  margin-top: 7px;
}

.ptab.gap-4 {
  margin-top: 6px;
}

.ptab.on {
  background-color: #2e2e2e;
  color: #5a90dc;
  border-radius: 4px 0 0 4px;
}

.tint-blue {
  color: #6f92c8;
}

.tint-green {
  color: #35b07a;
}

.prop-main {
  flex: 1;
  padding: 6px 6px 0 6px;
}

.obj-line {
  height: 18px;
  display: flex;
  align-items: center;
  gap: 6px;
  padding-left: 3px;
  color: #c8c8c8;
}

.obj-line .pin-ic {
  margin-left: auto;
  color: #999;
}

.add-mod {
  height: 17px;
  margin-top: 14px;
  display: flex;
  align-items: center;
  justify-content: space-between;
  padding: 0 4px 0 7px;
  background-color: #282828;
  border: 1px solid #333;
  border-radius: 4px;
  color: #cfcfcf;
}

/*status bar*/
.statusbar {
  position: relative;
  height: 20px;
  flex: none;
  display: flex;
  align-items: center;
  padding: 0 6px 4px 10px;
  background-color: #1d1d1d;
  color: #9e9e9e;
}

.hint {
  width: 210px;
  display: flex;
  align-items: center;
  gap: 9px;
}

.mouse-ic {
  width: 11px;
  height: 14px;
  color: #aaa;
}

.version {
  margin-left: auto;
}

.status-strip {
  position: absolute;
  left: 393px;
  bottom: 0;
  width: 48px;
  height: 2px;
  background-color: #3a3a3a;
}
```
